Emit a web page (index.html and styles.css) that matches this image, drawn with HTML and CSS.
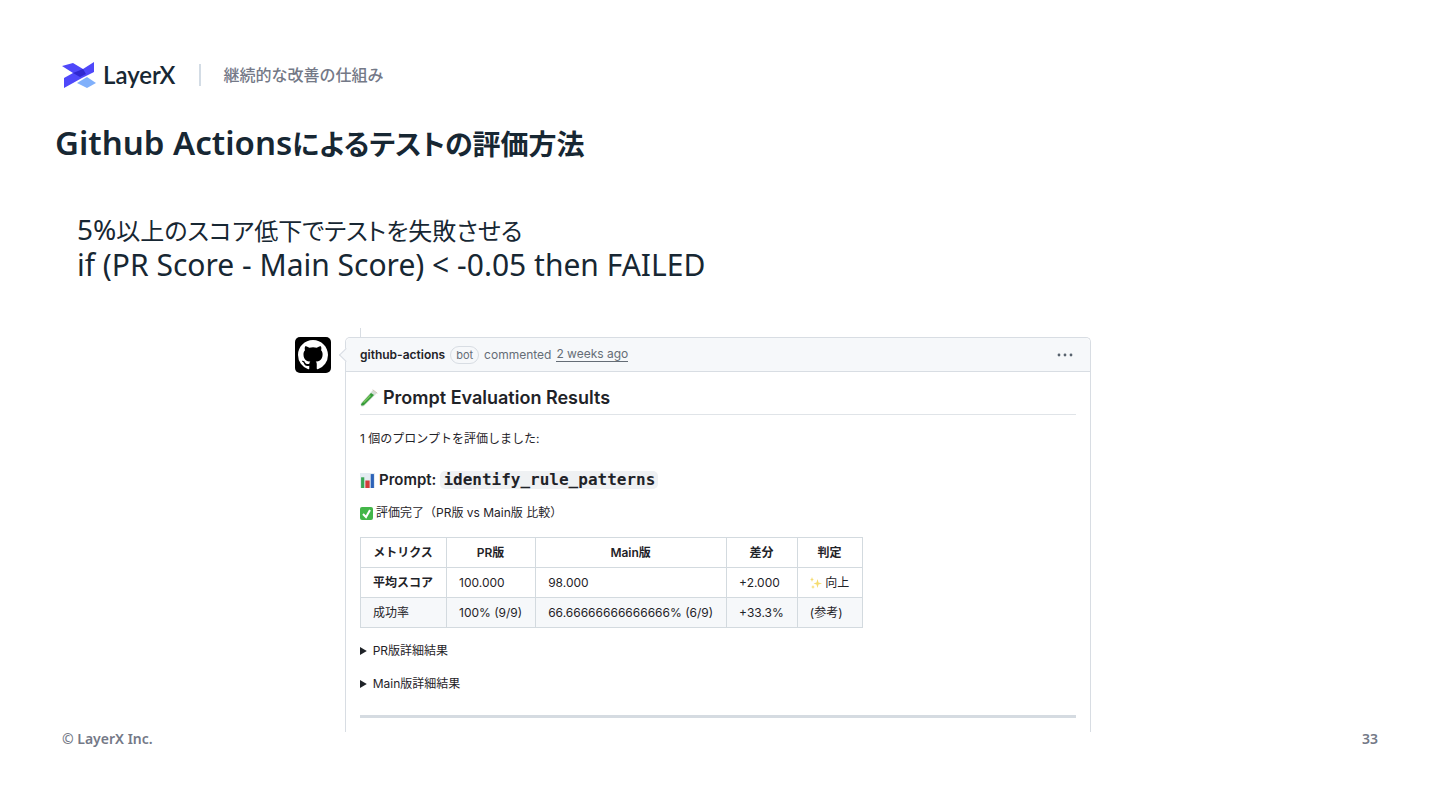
FILE: index.html
```html
<!DOCTYPE html>
<html lang="ja">
<head>
    <meta charset="UTF-8">
    <meta name="viewport" content="width=device-width, initial-scale=1.0">
    <title>Github Actionsによるテストの評価方法</title>
    <link rel="stylesheet" href="styles.css">
</head>
<body>
    <main class="slide">
        <header class="slide-header">
            <div class="logo">
                <svg class="logo-mark" viewBox="0 0 34 28" aria-hidden="true">
                    <path fill="#4f48fa" d="M0 5 11 2 21 8 32 1V11L20 17 2 27V17L11 12Z"/>
                    <path fill="#3028d0" d="M11 12 21 8 24 13 18 16Z"/>
                    <path fill="#80b0fb" d="M15 22 25 16 34 22 25 27Z"/>
                </svg>
                <span class="logo-name">LayerX</span>
            </div>
            <p class="section-name">継続的な改善の仕組み</p>
        </header>

        <h1><span class="latin">Github Actions</span>によるテストの評価方法</h1>

        <div class="lead">
            <p><span class="latin">5%</span>以上のスコア低下でテストを失敗させる</p>
            <p class="formula">if (PR Score - Main Score) &lt; -0.05 then FAILED</p>
        </div>

        <section class="timeline">
            <div class="avatar">
                <svg viewBox="0 0 16 16" aria-hidden="true">
                    <path fill="#fff" d="M8 0c4.42 0 8 3.58 8 8a8.013 8.013 0 0 1-5.45 7.59c-.4.08-.55-.17-.55-.38 0-.27.01-1.13.01-2.2 0-.75-.25-1.23-.54-1.48 1.78-.2 3.65-.88 3.65-3.95 0-.88-.31-1.59-.82-2.15.08-.2.36-1.02-.08-2.12 0 0-.67-.22-2.2.82-.64-.18-1.32-.27-2-.27-.68 0-1.36.09-2 .27-1.53-1.03-2.2-.82-2.2-.82-.44 1.1-.16 1.92-.08 2.12-.51.56-.82 1.28-.82 2.15 0 3.06 1.86 3.75 3.64 3.95-.23.2-.44.55-.51 1.07-.46.21-1.61.55-2.33-.66-.15-.24-.6-.83-1.23-.82-.67.01-.27.38.01.53.34.19.73.9.82 1.13.16.45.68 1.31 2.69.94 0 .67.01 1.3.01 1.49 0 .21-.15.45-.55.38A7.995 7.995 0 0 1 0 8c0-4.42 3.58-8 8-8Z"/>
                </svg>
            </div>

            <article class="comment">
                <div class="comment-header">
                    <strong>github-actions</strong>
                    <span class="badge">bot</span>
                    <span>commented</span>
                    <a href="#">2 weeks ago</a>
                    <button type="button" class="menu" aria-label="Show options">
                        <svg viewBox="0 0 16 4" aria-hidden="true">
                            <circle cx="2" cy="2" r="1.4"/>
                            <circle cx="8" cy="2" r="1.4"/>
                            <circle cx="14" cy="2" r="1.4"/>
                        </svg>
                    </button>
                </div>

                <div class="comment-body">
                    <h2>
                        <svg class="tube" viewBox="0 0 18 18" aria-hidden="true">
                            <path fill="#d5ddd6" d="M13 1 17 4 4 17Q2 18 1 17 0 15 1 14Z"/>
                            <path fill="#349b38" d="M11 4 14 6 4 16Q2 17 1 16 1 15 2 14Z"/>
                            <path fill="#79c65e" d="M10 6 11 7 4 14 3 13Z"/>
                            <path fill="none" stroke="#d2c4b6" stroke-linecap="round" d="M13 1 17 4"/>
                        </svg>
                        Prompt Evaluation Results
                    </h2>
                    <p class="summary">1 個のプロンプトを評価しました:</p>

                    <h3>
                        <svg class="chart" viewBox="0 0 14 14" aria-hidden="true">
                            <path fill="#e4ecf2" d="M0 0H14V14H0Z"/>
                            <path fill="#3aa655" d="M1 4H4V14H1Z"/>
                            <path fill="#d33b3b" d="M5 7H9V14H5Z"/>
                            <path fill="#2c62b8" d="M10 1H13V14H10Z"/>
                        </svg>
                        Prompt: <code>identify_rule_patterns</code>
                    </h3>
                    <p class="status">
                        <svg class="check" viewBox="0 0 13 13" aria-hidden="true">
                            <rect width="13" height="13" rx="2" fill="#43b649"/>
                            <path fill="none" stroke="#fff" stroke-width="2" d="M3 7 6 10 10 3"/>
                        </svg>
                        評価完了（PR版 vs Main版 比較）
                    </p>

                    <table>
                        <thead>
                            <tr>
                                <th>メトリクス</th>
                                <th>PR版</th>
                                <th>Main版</th>
                                <th>差分</th>
                                <th>判定</th>
                            </tr>
                        </thead>
                        <tbody>
                            <tr>
                                <td><strong>平均スコア</strong></td>
                                <td>100.000</td>
                                <td>98.000</td>
                                <td>+2.000</td>
                                <td>
                                    <svg class="sparkles" viewBox="0 0 12 12" aria-hidden="true">
                                        <path fill="#f5dc70" d="M7.500 2 8.500 5.500 12 6.500 8.500 7.500 7.500 11 6.500 7.500 3.500 6.500 6.500 5.500ZM2 0 2.700 2 4 2.500 2.700 3 2 5 1.300 3 0 2.500 1.300 2ZM3 8 3.600 9.400 5 10 3.600 10.600 3 12 2.400 10.600 1 10 2.400 9.400Z"/>
                                    </svg>
                                    向上
                                </td>
                            </tr>
                            <tr>
                                <td>成功率</td>
                                <td>100% (9/9)</td>
                                <td>66.66666666666666% (6/9)</td>
                                <td>+33.3%</td>
                                <td>(参考)</td>
                            </tr>
                        </tbody>
                    </table>

                    <details>
                        <summary>PR版詳細結果</summary>
                    </details>
                    <details>
                        <summary>Main版詳細結果</summary>
                    </details>
                    <hr>
                </div>
            </article>
        </section>

        <footer class="slide-footer">
            <span>© LayerX Inc.</span>
            <span class="page-number">33</span>
        </footer>
    </main>
</body>
</html>
```
FILE: styles.css
```css
* {
    box-sizing: border-box;
}

body {
    margin: 0;
    background: #fff;
    color: #172733;
    font-family: "Noto Sans", "Noto Sans CJK JP", sans-serif;
}

h1, h2, h3, p {
    margin: 0;
}

.slide {
    min-height: 100vh;
    padding: 60px 62px 0;
}

/* Logo and section name */
.slide-header {
    display: flex;
    align-items: center;
    height: 30px;
}

.logo {
    display: flex;
    align-items: center;
    gap: 7px;
    padding-right: 24px;
}

.logo-mark {
    width: 34px;
    height: 28px;
}

.logo-name {
    font-family: Lato, sans-serif;
    font-size: 24px;
    font-weight: 600;
    line-height: 30px;
}

.section-name {
    padding-left: 22px;
    border-left: 2px solid #d3dce5;
    color: #747987;
    font-size: 16px;
    font-weight: 500;
    line-height: 22px;
}

h1 {
    margin: 34px 0 0 -7px;
    font-size: 28px;
    font-weight: 600;
    line-height: 40px;
    font-feature-settings: "palt";
}

.latin {
    line-height: 1;
}

h1 .latin {
    font-size: 33px;
}

.lead {
    margin: 50px 0 0 15px;
    font-size: 24px;
    line-height: 34px;
    font-feature-settings: "palt";
}

.lead .latin {
    font-size: 28px;
}

.formula {
    font-size: 30px;
}

/* Github comment */
.timeline {
    display: flex;
    gap: 14px;
    margin: 46px 287px 0 233px;
    color: #1f2328;
    font-family: Inter, "Noto Sans CJK JP", sans-serif;
    font-size: 12px;
}

.avatar {
    flex: none;
    width: 36px;
    height: 36px;
    margin-top: 9px;
    padding: 3px;
    border-radius: 5px;
    background: #000;
}

.avatar svg {
    display: block;
}

.comment {
    position: relative;
    flex: 1;
    margin-top: 9px;
    border: 1px solid #d8dde3;
    border-bottom: 0;
    border-radius: 5px 5px 0 0;
}

/* piece of the timeline above the comment */
.comment::before {
    content: "";
    position: absolute;
    top: -10px;
    left: 14px;
    width: 1px;
    height: 9px;
    background: #d8dde3;
}

/* arrow that points to the avatar */
.comment::after {
    content: "";
    position: absolute;
    top: 12px;
    left: -5px;
    width: 9px;
    height: 9px;
    border: solid #d8dde3;
    border-width: 0 0 1px 1px;
    background: #f6f8fa;
    transform: rotate(45deg);
}

.comment-header {
    display: flex;
    align-items: center;
    gap: 5px;
    height: 34px;
    padding: 0 14px;
    border-bottom: 1px solid #d8dde3;
    border-radius: 5px 5px 0 0;
    background: #f6f8fa;
    color: #656d76;
}

.comment-header strong {
    color: #1f2328;
    font-weight: 600;
}

.comment-header a {
    border-bottom: 1px solid #656d76;
    color: inherit;
    line-height: 14px;
    text-decoration: none;
}

.badge {
    padding: 0 5px;
    border: 1px solid #d8dde3;
    border-radius: 9px;
    font-size: 11px;
    line-height: 16px;
}

.menu {
    display: flex;
    margin-left: auto;
    padding: 4px 3px;
    border: 0;
    background: none;
}

.menu svg {
    width: 16px;
    height: 4px;
    fill: #59636e;
}

.comment-body {
    padding: 12px 14px 14px;
}

h2 {
    display: flex;
    align-items: center;
    gap: 5px;
    padding-bottom: 2px;
    border-bottom: 1px solid #e0e4e8;
    font-size: 18px;
    font-weight: 600;
    line-height: 28px;
}

.tube {
    width: 18px;
    height: 18px;
}

.summary {
    margin-top: 14px;
    line-height: 20px;
}

h3 {
    display: flex;
    align-items: center;
    gap: 4px;
    margin-top: 20px;
    font-size: 15px;
    font-weight: 600;
    line-height: 22px;
}

.chart {
    width: 15px;
    height: 15px;
}

code {
    padding: 0 3px;
    border-radius: 5px;
    background: #eff1f3;
    font-family: "DejaVu Sans Mono", monospace;
    font-size: 16px;
    line-height: 18px;
}

.status {
    display: flex;
    align-items: center;
    gap: 3px;
    margin-top: 12px;
    line-height: 20px;
}

.check {
    width: 13px;
    height: 13px;
}

table {
    margin-top: 14px;
    border-collapse: collapse;
}

th, td {
    height: 30px;
    padding: 0 13px 0 12px;
    border: 1px solid #d3dadf;
    line-height: 20px;
    text-align: left;
}

th {
    font-weight: 600;
    text-align: center;
}

tbody tr:nth-child(2) {
    background: #f6f8fa;
}

.sparkles {
    width: 12px;
    height: 12px;
    vertical-align: -2px;
}

details {
    margin-top: 13px;
    line-height: 20px;
}

hr {
    height: 3px;
    margin: 21px 0 0;
    border: 0;
    background: #d5dbe1;
}

.slide-footer {
    display: flex;
    justify-content: space-between;
    color: #747987;
    font-size: 14px;
    font-weight: 600;
    line-height: 14px;
}
```
